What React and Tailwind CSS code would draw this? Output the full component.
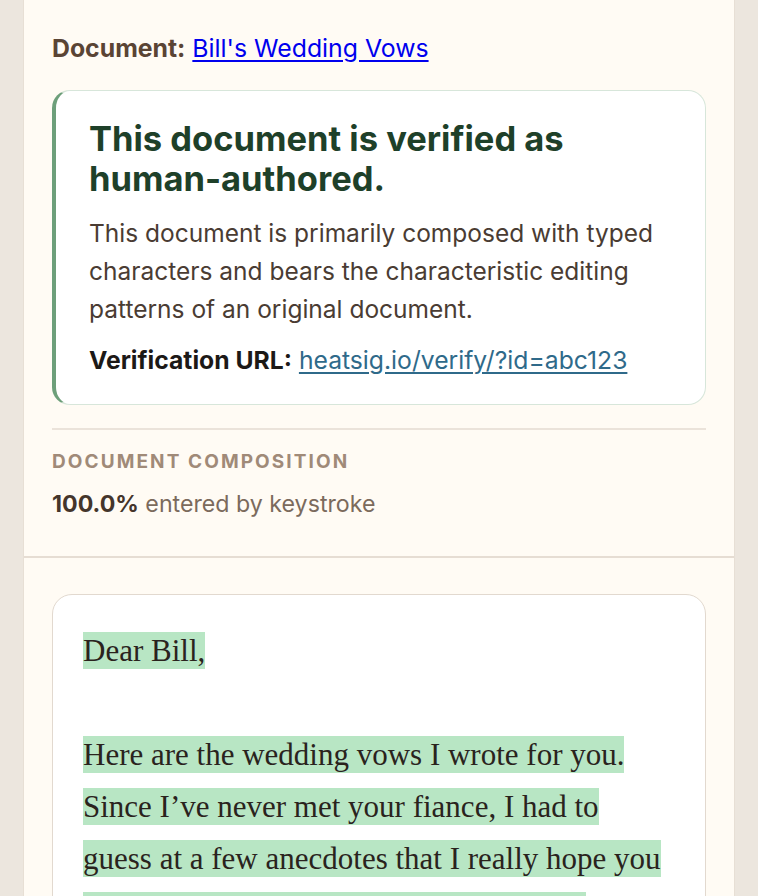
export default function App() {
  return (
    <div className="min-h-screen bg-[#ece6de] font-['Inter','Noto_Sans',sans-serif]">
      <div className="mx-auto w-[712px] border-x border-[#e7dfd5] bg-[#fffbf4]">
        {/* Verification summary */}
        <section className="px-[28px] pt-[30px] pb-[36px]">
          <p className="text-[24.8px] leading-[36px] text-[#5a4434]">
            <strong className="font-bold">Document:</strong>{" "}
            <a href="#" className="text-[#0000ee] underline underline-offset-[3px]">
              Bill's Wedding Vows
            </a>
          </p>

          <div className="mt-[24px] rounded-[18px] border border-l-4 border-[#d7e6da] border-l-[#6d9f7a] bg-white pt-[28px] pr-[30px] pb-[25px] pl-[33px]">
            <h2 className="text-[34.5px] leading-[40px] font-bold text-[#1e4029]">
              This document is verified as
              <br />
              human-authored.
            </h2>
            <p className="mt-[15px] text-[24.5px] leading-[38px] text-[#4a3c33]">
              This document is primarily composed with typed characters and
              bears the characteristic editing patterns of an original document.
            </p>
            <p className="mt-[13px] text-[24.7px] leading-[38px] text-[#4a3c33]">
              <strong className="font-bold text-[#1c1917]">Verification URL:</strong>{" "}
              <a href="#" className="text-[#2f6a8a] underline underline-offset-[3px]">
                heatsig.io/verify/?id=abc123
              </a>
            </p>
          </div>

          <div className="mt-[23px] h-[2px] bg-[#ebe3da]" />

          <h3 className="mt-[20px] text-[19px] leading-[24px] font-bold tracking-[0.11em] text-[#a08a78] uppercase">
            Document Composition
          </h3>
          <p className="mt-[14px] text-[23.2px] leading-[32px] text-[#7b6a5c]">
            <strong className="font-bold text-[#44352b]">100.0%</strong> entered by keystroke
          </p>
        </section>

        {/* Document body */}
        <section className="border-t-2 border-[#e6ddd3] px-[28px] pt-[36px] pb-[40px]">
          <div className="rounded-[20px] border-[1.5px] border-[#e2d9cf] bg-white pt-[30px] pr-[30px] pb-[30px] pl-[30px] font-['Liberation_Serif','Times_New_Roman',serif] text-[31px] leading-[52px] text-[#2a231d]">
            <p>
              <span className="bg-[#b8e6c4] py-[1px]">Dear Bill,</span>
            </p>
            <p>&nbsp;</p>
            <p>
              <span className="box-decoration-clone bg-[#b8e6c4] py-[1px]">
                Here are the wedding vows I wrote for you. Since I’ve never met
                your fiance, I had to guess at a few anecdotes that I really hope
                you will be accurate for you and your fiance. Congratulations
                to you both, and enjoy the big day!
              </span>
            </p>
          </div>
        </section>
      </div>
    </div>
  );
}
